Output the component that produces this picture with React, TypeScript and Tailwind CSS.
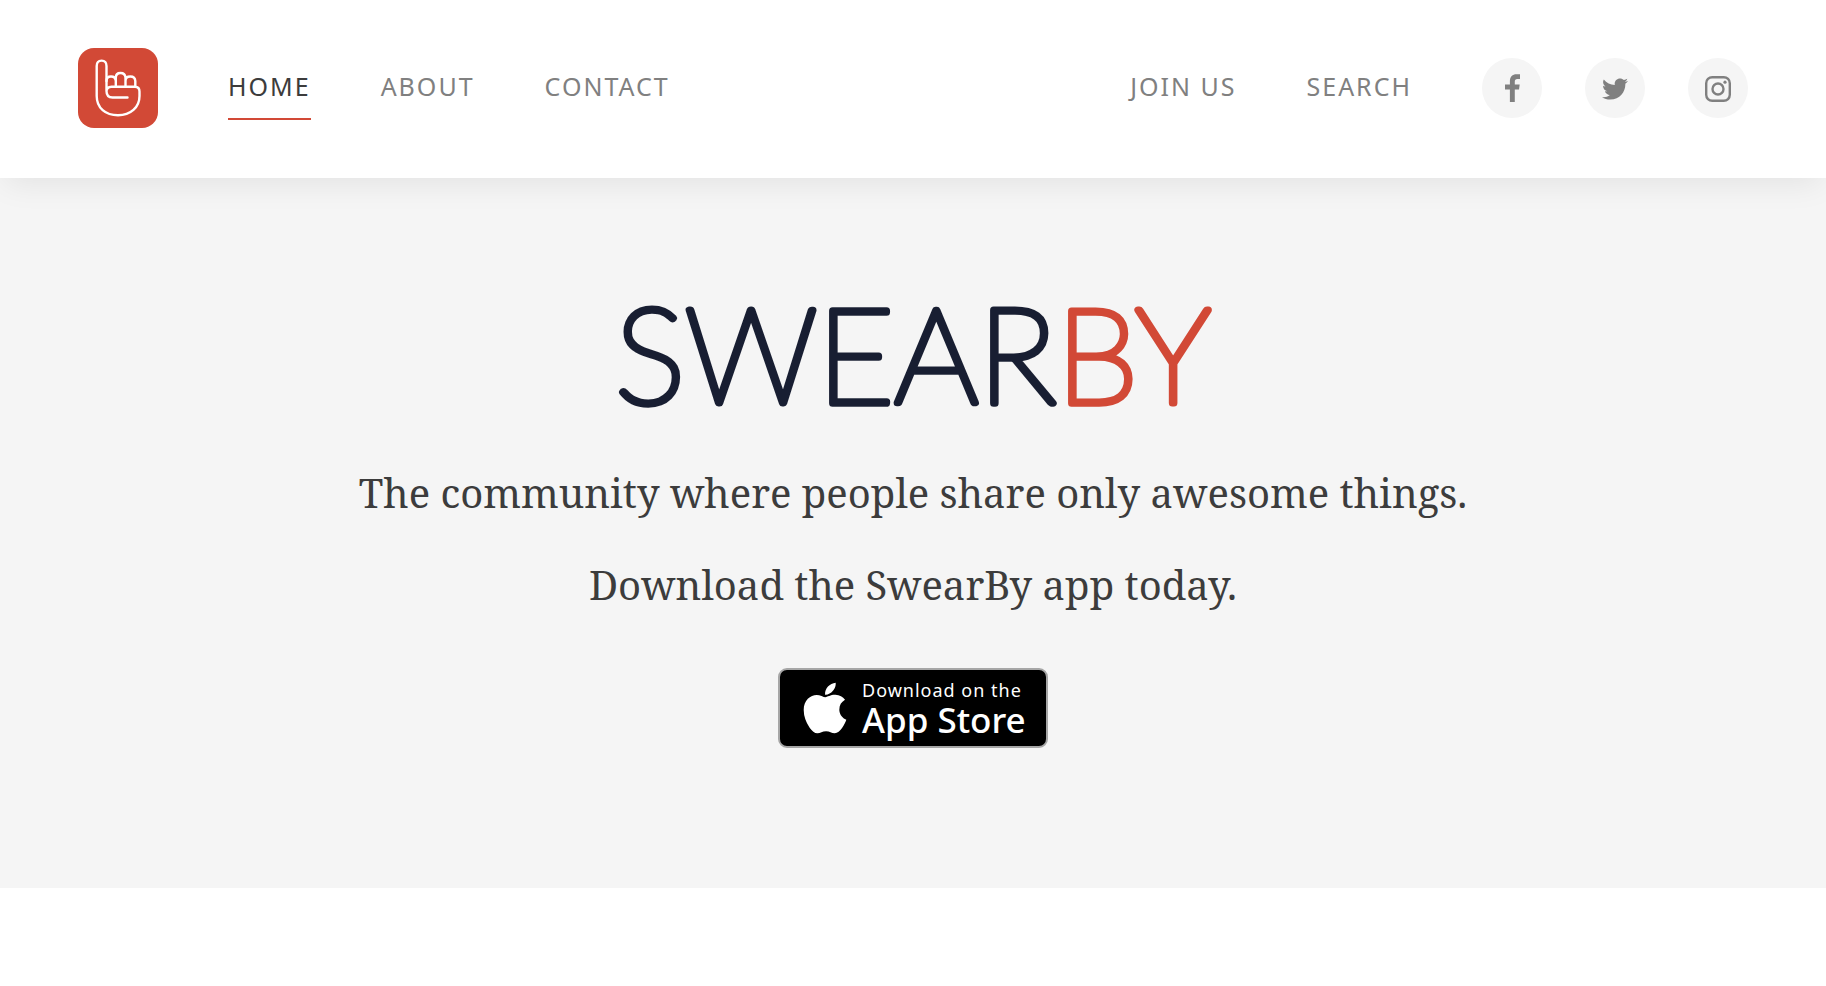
import { FaApple, FaTwitter } from 'react-icons/fa';

const navLink =
  'border-b-2 border-transparent pt-[14px] pb-4 text-[25px] leading-[32px] tracking-[2px] uppercase text-[#808080]';

const circle = 'flex size-[60px] items-center justify-center rounded-full bg-[#f5f5f5] pt-[2px] text-[#808080]';

const tagline = "font-['Noto_Serif','Droid_Serif',serif] text-[40px] leading-[72px] text-[#3c3c3c]";

function HandLogo() {
  return (
    <a href="#home" aria-label="SwearBy home" className="block size-20 shrink-0">
      <svg viewBox="0 0 80 80" className="size-20" fill="none" stroke="#fff" strokeWidth="2.4" strokeLinecap="round" strokeLinejoin="round">
        <rect width="80" height="80" rx="16" fill="#d24936" stroke="none" />
        <path d="M49.5 49.5H34.5Q28.5 49.5 28.5 43V18Q28.5 12.6 23.6 12.6T18.7 18V48C18.7 60 27.5 67.3 40 67.3S61.5 59.5 61.5 48V43.5Q61.5 38.7 57 38.7H33.5Q28.5 38.7 28.5 43.5" />
        <path d="M28.5 33Q28.5 28.5 33 28.5T37.8 33V38.5M37.8 38.5V29.7Q37.8 25 42.5 25T47.5 29.7V38.5M47.5 33Q47.5 28.5 52.3 28.5T57.3 33V38.5" />
      </svg>
    </a>
  );
}

function FacebookIcon() {
  return (
    <svg viewBox="0 0 46 91" className="h-[30px] w-[15px]" fill="currentColor" aria-hidden="true">
      <path d="M15 85V47H0V32H15V22C15 7 23 0 35 0H46V15H38C32 15 30 18 30 23V32H45L43 47H30V85Z" />
    </svg>
  );
}

function InstagramIcon() {
  return (
    <svg viewBox="0 0 26 26" className="size-[26px]" fill="none" stroke="currentColor" strokeWidth="2.4" aria-hidden="true">
      <rect x="1.2" y="1.2" width="23.6" height="23.6" rx="6" />
      <circle cx="13" cy="13" r="5.5" />
      <circle cx="20" cy="6.2" r="1.6" fill="currentColor" stroke="none" />
    </svg>
  );
}

export default function App() {
  return (
    <div className="min-h-screen bg-white font-['Noto_Sans',sans-serif]">
      <header className="relative flex items-center justify-between bg-white px-[78px] pt-12 pb-[50px] shadow-[0_10px_30px_-5px_rgba(0,0,0,0.08)]">
        <nav aria-label="Main" className="flex items-center gap-[70px]">
          <HandLogo />
          <a href="#home" aria-current="page" className="border-b-2 border-[#d24936] pt-[14px] pb-4 text-[25px] leading-[32px] tracking-[2px] uppercase text-[#3c3c3c]">Home</a>
          <a href="#about" className={navLink}>About</a>
          <a href="#contact" className={navLink}>Contact</a>
        </nav>
        <div className="flex items-center gap-[70px]">
          <a href="#join" className={navLink}>Join us</a>
          <a href="#search" className={navLink}>Search</a>
          <div className="flex gap-[43px]">
            <a href="#facebook" aria-label="Facebook" className={circle}><FacebookIcon /></a>
            <a href="#twitter" aria-label="Twitter" className={circle}><FaTwitter size={26} /></a>
            <a href="#instagram" aria-label="Instagram" className={circle}><InstagramIcon /></a>
          </div>
        </div>
      </header>
      <main className="flex flex-col items-center bg-[#f5f5f5] px-8 pt-[88px] pb-[140px] text-center">
        <h1>
          <svg viewBox="0 0 660 180" className="h-[180px] w-[660px]" role="img" aria-label="SwearBy">
            <text x="330" y="137" textAnchor="middle" fontSize="132" strokeWidth="7" strokeLinejoin="round" className="font-['Lato',sans-serif] font-thin">
              <tspan fill="#181e32" stroke="#181e32">SWEAR</tspan>
              <tspan fill="#d24936" stroke="#d24936">BY</tspan>
            </text>
          </svg>
        </h1>
        <p className={`mt-[11px] ${tagline}`}>The community where people share only awesome things.</p>
        <p className={`mt-5 ${tagline}`}>Download the SwearBy app today.</p>
        <a href="#app-store" className="mt-[47px] flex h-[80px] w-[270px] items-center rounded-[9px] border-2 border-[#a6a6a6] bg-black pl-4 text-white">
          <FaApple size={58} />
          <span className="ml-2 flex flex-col text-left">
            <span className="text-[18px] leading-[24px] tracking-[1px]">Download on the</span>
            <span className="text-[35px] leading-[36px] font-medium">App Store</span>
          </span>
        </a>
      </main>
    </div>
  );
}
